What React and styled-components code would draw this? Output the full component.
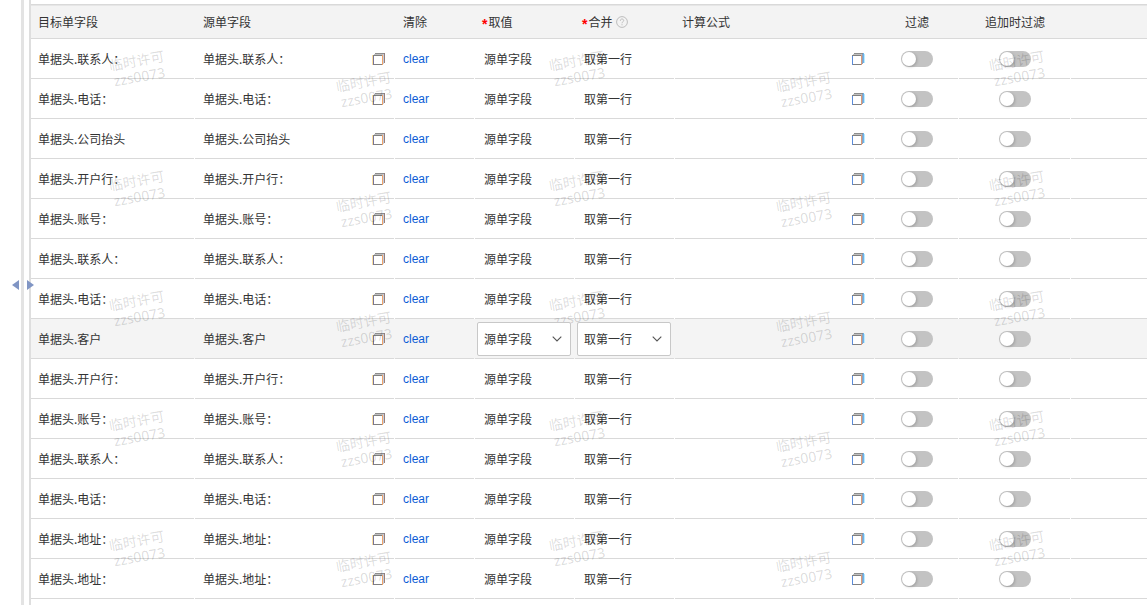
import React, { useState } from "react";
import styled, { createGlobalStyle } from "styled-components";

const GlobalStyle = createGlobalStyle`
  * { box-sizing: border-box; }
  body {
    margin: 0;
    background: #fff;
    color: #333;
    font: 12px/18px "Noto Sans CJK SC", "Noto Sans", sans-serif;
    overflow: hidden;
  }
`;

const Page = styled.div`
  display: flex;
  position: relative;
  min-height: 100vh;
  overflow: hidden;
`;

const Splitter = styled.div`
  flex: none;
  position: relative;
  width: 8px;
  margin-left: 21px;
  border-left: 3px solid #e3e3e3;
`;

const CollapseButton = styled.button`
  position: absolute;
  z-index: 2;
  top: 280px;
  ${(p) => (p.$side === "left" ? "right: 10px;" : "left: 3px;")}
  width: 7px;
  height: 10px;
  padding: 0;
  border: 0;
  background: none;
  cursor: pointer;
  svg { display: block; }
`;

const Pane = styled.main`
  flex: 1;
  min-width: 0;
  padding-top: 4px;
  border-left: 2px solid #dedede;
`;

const Table = styled.table`
  width: 100%;
  table-layout: fixed;
  border-collapse: separate;
  border-spacing: 0;
`;

const Col = styled.col`
  width: ${(p) => (p.$w ? `${p.$w}px` : "auto")};
`;

const HeadCell = styled.th`
  height: 35px;
  padding: 0 8px;
  background: #f3f3f3;
  border-top: 1px solid #d9d9d9;
  border-bottom: 1px solid #d9d9d9;
  box-shadow: inset 0 1px #e6e6e6;
  font-weight: 400;
  text-align: ${(p) => p.$align || "left"};
  white-space: nowrap;
  ${(p) => p.$tight && "padding-left: 7px;"}
`;

const Required = styled.span`
  color: #f00;
  font-family: "Liberation Sans", sans-serif;
  font-weight: 700;
  font-size: 14px;
  line-height: 12px;
  vertical-align: -2px;
  margin-right: 1px;
`;

const Help = styled.svg`
  margin-left: 4px;
  vertical-align: -1px;
`;

const Row = styled.tr`
  background: ${(p) => (p.$active ? "#f4f4f4" : "#fff")};
`;

const Cell = styled.td`
  height: 40px;
  padding: 0 8px;
  background: linear-gradient(#d9d9d9, #d9d9d9) left bottom / calc(100% - 1px) 1px no-repeat;
  white-space: nowrap;
  ${(p) => p.$tight && "padding-left: 7px;"}
  ${(p) => p.$value && "padding: 0 2px;"}
  ${(p) => p.$link && "padding-bottom: 2px;"}
  &:last-child { background-size: 100% 1px; }
`;

const Picker = styled.div`
  display: flex;
  align-items: center;
  justify-content: space-between;
`;

const PickButton = styled.button`
  width: 14px;
  height: 14px;
  margin-right: 1px;
  padding: 0;
  border: 0;
  background: none;
  cursor: pointer;
  svg { display: block; }
`;

const ClearLink = styled.a`
  color: #0b5cd6;
  font-family: "Liberation Sans", Arial, sans-serif;
  text-decoration: none;
`;

const ValueText = styled.span`
  padding-left: 7px;
`;

const SelectBox = styled.div`
  display: flex;
  align-items: center;
  position: relative;
  z-index: 2;
  width: 94px;
  svg {
    position: absolute;
    right: 9px;
    pointer-events: none;
  }
`;

const Select = styled.select`
  appearance: none;
  width: 100%;
  height: 34px;
  padding: 0 24px 0 6px;
  border: 1px solid #c8c8c8;
  border-radius: 2px;
  background: #fff;
  color: #333;
  font: inherit;
`;

const Switch = styled.input`
  appearance: none;
  display: block;
  width: 32px;
  height: 16px;
  margin: 0 auto;
  padding: 1px;
  border-radius: 8px;
  background: ${(p) => (p.checked ? "#3b7ddd" : "#c3c3c3")};
  cursor: pointer;
  &::before {
    content: "";
    display: block;
    width: 14px;
    height: 14px;
    margin-left: ${(p) => (p.checked ? "16px" : "0")};
    border-radius: 50%;
    background: #fff;
    box-shadow: 1px 1px 3px rgba(0, 0, 0, 0.2);
  }
`;

const Watermarks = styled.div`
  position: absolute;
  z-index: 1;
  inset: 0;
  display: grid;
  grid-template-columns: 227px 213px 227px 213px 56px;
  grid-auto-rows: 120px;
  padding: 53px 0 0 110px;
  overflow: hidden;
  pointer-events: none;
`;

const Mark = styled.div`
  width: 56px;
  height: 32px;
  margin-top: ${(p) => (p.$low ? "21px" : "0")};
  color: rgba(0, 0, 0, 0.15);
  font: 14px/16px "Noto Sans", "Noto Sans CJK SC", sans-serif;
  text-align: center;
  white-space: nowrap;
  transform: rotate(-10deg);
`;

const widths = [164, 200, 80, 100, 100, 200, 84, 112, 0];

const fields = [
  "联系人：", "电话：", "公司抬头", "开户行：", "账号：", "联系人：", "电话：",
  "客户", "开户行：", "账号：", "联系人：", "电话：", "地址：", "地址：",
].map((name) => `单据头.${name}`);

const ACTIVE_ROW = 7;
const MARK_COLUMNS = 5;
const MARK_ROWS = 5;

function BoxIcon({ edge }) {
  const warm = edge === "warm";
  return (
    <svg width="14" height="14" viewBox={warm ? "0 0 14 14" : "1 0 14 14"}>
      <rect x="3" y="1" width="10" height="1" fill="#8e8e8e" />
      <rect x="2" y="2" width="10" height="1" fill="#c0c0c0" />
      <rect x="1" y="3" width="10" height="10" fill="#808080" />
      <rect x="2" y="4" width="8" height="8" fill="#fff" />
      <rect x="1" y="4" width="1" height="9" fill={warm ? "#77749a" : "#5b8bd8"} />
      {warm && <rect x="0" y="3" width="1" height="10" fill="#fbdf9f" />}
      <rect x="10" y="3" width="1" height="10" fill={warm ? "#f0a368" : "#dc9c78"} />
      <rect x="11" y="2" width="1" height="10" fill={warm ? "#c4cbdc" : "#8f9fbc"} />
      <rect x="12" y="1" width="1" height="10" fill={warm ? "#94807c" : "#6bb4ec"} />
      {!warm && <rect x="13" y="2" width="1" height="9" fill="#b8ecff" />}
    </svg>
  );
}

function Pick({ label, edge }) {
  return (
    <PickButton type="button" aria-label={label}>
      <BoxIcon edge={edge} />
    </PickButton>
  );
}

function Dropdown({ label, options }) {
  return (
    <SelectBox>
      <Select aria-label={label} defaultValue={options[0]}>
        {options.map((o) => <option key={o}>{o}</option>)}
      </Select>
      <svg width="10" height="6" viewBox="0 0 10 6" fill="none">
        <path d="M0.7 0.7L5 5L9.3 0.7" stroke="#555" strokeWidth="1.1" />
      </svg>
    </SelectBox>
  );
}

function Toggle({ label }) {
  const [on, setOn] = useState(false);
  return <Switch type="checkbox" aria-label={label} checked={on} onChange={() => setOn(!on)} />;
}

function FieldRow({ field, active }) {
  return (
    <Row $active={active}>
      <Cell $tight>{field}</Cell>
      <Cell>
        <Picker>
          {field}
          <Pick label="选择源单字段" edge="warm" />
        </Picker>
      </Cell>
      <Cell $link><ClearLink href="#clear">clear</ClearLink></Cell>
      <Cell $value>
        {active ? <Dropdown label="取值" options={["源单字段"]} /> : <ValueText>源单字段</ValueText>}
      </Cell>
      <Cell $value>
        {active ? <Dropdown label="合并" options={["取第一行"]} /> : <ValueText>取第一行</ValueText>}
      </Cell>
      <Cell>
        <Picker>
          <span />
          <Pick label="编辑计算公式" edge="cool" />
        </Picker>
      </Cell>
      <Cell><Toggle label="过滤" /></Cell>
      <Cell><Toggle label="追加时过滤" /></Cell>
      <Cell />
    </Row>
  );
}

export default function App() {
  return (
    <Page>
      <GlobalStyle />
      <Splitter>
        <CollapseButton type="button" $side="left" aria-label="向左收起">
          <svg width="7" height="10" viewBox="0 0 7 10"><path d="M7 0V10L0 5Z" fill="#8095c4" /></svg>
        </CollapseButton>
        <CollapseButton type="button" $side="right" aria-label="向右收起">
          <svg width="7" height="10" viewBox="0 0 7 10"><path d="M0 0V10L7 5Z" fill="#8095c4" /></svg>
        </CollapseButton>
      </Splitter>
      <Pane>
        <Table>
          <colgroup>
            {widths.map((w, i) => <Col key={i} $w={w} />)}
          </colgroup>
          <thead>
            <tr>
              <HeadCell $tight>目标单字段</HeadCell>
              <HeadCell>源单字段</HeadCell>
              <HeadCell>清除</HeadCell>
              <HeadCell $tight><Required>*</Required>取值</HeadCell>
              <HeadCell $tight>
                <Required>*</Required>合并
                <Help width="12" height="12" viewBox="0 0 12 12" fill="none" stroke="#bdbdbd">
                  <circle cx="6" cy="6" r="5.4" />
                  <path d="M4.3 4.8C4.3 2.4 7.7 2.5 7.7 4.6C7.7 5.8 6 5.7 6 7.3M6 8.2V9.3" />
                </Help>
              </HeadCell>
              <HeadCell $tight>计算公式</HeadCell>
              <HeadCell $align="center">过滤</HeadCell>
              <HeadCell $align="center">追加时过滤</HeadCell>
              <HeadCell aria-label="操作" />
            </tr>
          </thead>
          <tbody>
            {fields.map((field, i) => (
              <FieldRow key={i} field={field} active={i === ACTIVE_ROW} />
            ))}
          </tbody>
        </Table>
      </Pane>
      <Watermarks aria-hidden="true">
        {Array.from({ length: MARK_COLUMNS * MARK_ROWS }, (_, i) => (
          <Mark key={i} $low={(i % MARK_COLUMNS) % 2 === 1}>临时许可<br />zzs0073</Mark>
        ))}
      </Watermarks>
    </Page>
  );
}
